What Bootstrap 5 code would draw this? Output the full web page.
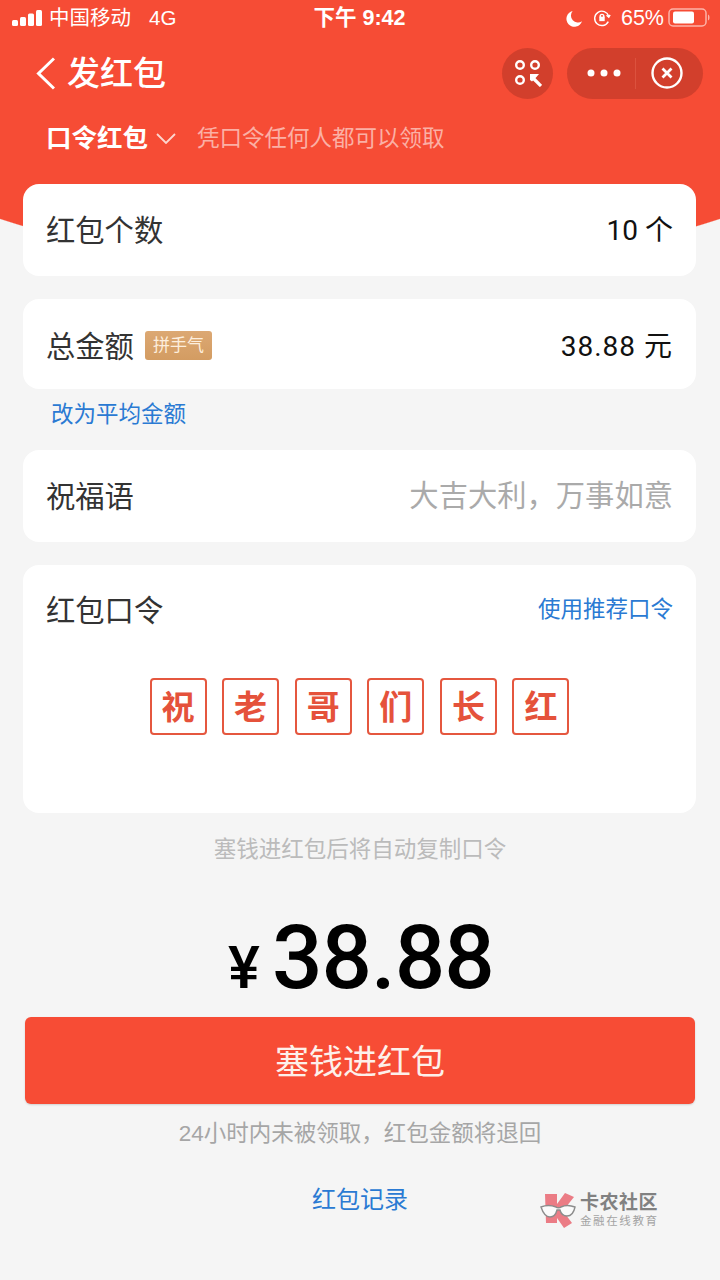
<!DOCTYPE html>
<html lang="zh">
<head>
  <meta charset="UTF-8" />
  <meta name="viewport" content="width=device-width, initial-scale=1" />
  <title>发红包</title>
  <link href="https://cdn.jsdelivr.net/npm/bootstrap@5.3.0/dist/css/bootstrap.min.css" rel="stylesheet" />
  <style>
    body {
      width: 720px;
      height: 1280px;
      overflow: hidden;
      position: relative;
      font-family: "Liberation Sans", "Noto Sans CJK SC", sans-serif;
      color: #333;
      background: radial-gradient(circle 1165px at 50% -888.500px, #f64c35 99.9%, transparent 100%) no-repeat, #f5f5f5;
    }
    .status-row { height: 36px; padding: 0 10px 0 12px; color: #fff; font-size: 20.500px; }
    .status-side { width: 300px; }
    .status-time { font-size: 21.500px; font-weight: 700; margin-left: -3px; }
    .status-gap { margin-left: 10px; }
    .status-pct { margin-left: 10px; font-size: 21.500px; }
    .carrier { margin-left: 7px; }
    .net-type { margin-left: 18px; }
    .nav-row { height: 50px; margin-top: 12px; padding: 0 17px 0 36px; color: #fff; }
    .nav-title { font-size: 33px; font-weight: 500; line-height: 50px; margin-left: 12px; padding-top: 2px; }
    .round-btn { width: 51px; height: 51px; border-radius: 50%; background: #d23f2c; margin-right: 14px; }
    .capsule { width: 136px; height: 51px; border-radius: 26px; background: #d23f2c; }
    .capsule-half { width: 68px; height: 51px; }
    .dots-half { padding-left: 6px; }
    .close-half { width: 67px; padding-right: 5px; }
    .capsule-line { width: 1px; height: 31px; background: #dc523e; }
    .mode-row { height: 40px; margin-top: 20px; padding-left: 46px; color: #fff; }
    .mode-name { font-size: 25.500px; font-weight: 700; }
    .mode-tip { font-size: 22.500px; color: #fbb0a5; margin-left: 21px; padding-top: 2px; }
    .sheet { margin: 26px 24px 0 23px; }
    .box { background: #fff; border-radius: 16px; padding: 0 23px; font-size: 29.300px; }
    .box-label { padding-top: 2px; }
    .box-count { height: 92px; }
    .box-sum { height: 90px; margin-top: 23px; padding-top: 3px; }
    .box-wish { height: 92px; margin-top: 23px; }
    .box-code { height: 248px; margin-top: 23px; padding-top: 22px; }
    .value-text { color: #111; font-family: Roboto, "Noto Sans CJK SC", sans-serif; font-size: 28px; letter-spacing: 1px; padding-top: 2px; }
    .box-count .value-text { letter-spacing: 0; }
    .lucky-tag { background: linear-gradient(#dca873, #d39c62); color: #fdeedd; font-size: 17px; line-height: 29px; height: 29px; padding: 0 8px; border-radius: 3px; margin-left: 11px; }
    .blue-link { color: #2a7ad3; font-size: 22.500px; text-decoration: none; }
    .switch-row { height: 50px; line-height: 52px; padding-left: 28px; margin-bottom: -12px; }
    .hint-text { color: #bbb; font-size: 22.500px; }
    .wish-text { color: #aaa; }
    .token-row { gap: 15.600px; margin-top: 45px; }
    .token { width: 57px; height: 57px; padding-top: 2px; border: 2px solid #e5573f; border-radius: 4px; color: #e5523b; font-size: 33px; font-weight: 700; }
    .hint-row { margin-top: 20px; line-height: 33px; }
    .money-row { margin-top: 42px; height: 100px; padding-left: 2px; color: #000; line-height: 100px; font-family: Roboto, sans-serif; font-weight: 500; }
    .money-sign { font-size: 60px; margin-right: 12px; }
    .money-num { font-size: 89px; letter-spacing: -1px; }
    .send-btn { display: block; width: 670px; height: 87px; margin: 9px 25px 0; padding-top: 9px; background: #f74c35; border: 0; border-radius: 6px; color: #fdf0ea; font-size: 34px; box-shadow: 0 1px 2px rgba(0,0,0,.15); }
    .note-row { color: #a6a6a6; font-size: 22.500px; margin-top: 13px; line-height: 33px; }
    .record-row { margin-top: 33px; line-height: 33px; }
    .record-row a { font-size: 24px; }
    .site-logo { position: absolute; left: 540px; top: 1192px; opacity: .65; }
    .site-name { font-size: 19px; font-weight: 700; line-height: 22px; color: #444; letter-spacing: .5px; }
    .site-sub { font-size: 11.500px; line-height: 14px; color: #777; letter-spacing: 1.600px; }
  </style>
</head>
<body>

<div class="status-row d-flex align-items-center justify-content-between">
  <div class="status-side d-flex align-items-center">
    <svg width="30" height="18" viewBox="0 0 30 18" fill="#fff">
      <rect x="0" y="11" width="6" height="6" rx="1.500"/><rect x="8" y="8" width="6" height="9" rx="1.500"/>
      <rect x="16" y="4.500" width="6" height="12.500" rx="1.500"/><rect x="24" y="1" width="6" height="16" rx="1.500"/>
    </svg>
    <span class="carrier">中国移动</span><span class="net-type">4G</span>
  </div>
  <div class="status-time">下午 9:42</div>
  <div class="status-side d-flex align-items-center justify-content-end">
    <svg width="17" height="17" viewBox="0 0 18 18" fill="#fff"><path d="M7 1a8.500 8.500 0 1 0 10 11 7.500 7.500 0 0 1-10-11z"/></svg>
    <svg class="status-gap" width="18" height="18" viewBox="0 0 20 20" fill="none" stroke="#fff" stroke-width="1.600">
      <path d="M17.500 8A8 8 0 1 0 17 14"/><path d="M15 7l2.500 2L19 6.500"/><rect x="7" y="8.500" width="6" height="5" fill="#fff" stroke="none"/><circle cx="10" cy="8" r="2"/>
    </svg>
    <span class="status-pct">65%</span>
    <svg class="ms-1" width="42" height="20" viewBox="0 0 42 20">
      <rect x="1" y="1" width="37" height="17" rx="4" fill="none" stroke="#fdb3a8" stroke-width="1.500"/>
      <rect x="5" y="3.500" width="21" height="12" rx="2" fill="#fff"/>
      <path d="M40 6.500c2 .5 2 5.500 0 6z" fill="#fdb3a8"/>
    </svg>
  </div>
</div>

<div class="nav-row d-flex align-items-center">
  <svg width="19" height="33" viewBox="0 0 19 33" fill="none" stroke="#fff" stroke-width="3"><path d="M18 1.500 2.500 16.500 18 31.500"/></svg>
  <div class="nav-title">发红包</div>
  <div class="round-btn d-flex align-items-center justify-content-center ms-auto">
    <svg width="28" height="28" viewBox="0 0 28 28" fill="none" stroke="#fff" stroke-width="2.400">
      <circle cx="6" cy="6" r="3.800"/><circle cx="21" cy="6" r="3.800"/><circle cx="6" cy="21" r="3.800"/>
      <path d="M19 19l8 8" stroke-width="3.200"/><path d="M16 15h9l-2.500 3-4.500 4.500-2-1.500z" fill="#fff" stroke="none"/>
    </svg>
  </div>
  <div class="capsule d-flex align-items-center">
    <div class="capsule-half dots-half d-flex align-items-center justify-content-center">
      <svg width="34" height="8" viewBox="0 0 34 8" fill="#fff"><circle cx="4" cy="4" r="3.500"/><circle cx="17" cy="4" r="3.500"/><circle cx="30" cy="4" r="3.500"/></svg>
    </div>
    <div class="capsule-line"></div>
    <div class="capsule-half close-half d-flex align-items-center justify-content-center">
      <svg width="32" height="32" viewBox="0 0 32 32" fill="none" stroke="#fff"><circle cx="16" cy="16" r="14.500" stroke-width="2.400"/><path d="M11.500 11.500l9 9M20.500 11.500l-9 9" stroke-width="2.800"/></svg>
    </div>
  </div>
</div>

<div class="mode-row d-flex align-items-center">
  <span class="mode-name">口令红包</span>
  <svg class="ms-2" width="20" height="11" viewBox="0 0 20 11" fill="none" stroke="#fdd6cf" stroke-width="1.800"><path d="M1 1l9 9 9-9"/></svg>
  <span class="mode-tip">凭口令任何人都可以领取</span>
</div>

<div class="sheet">
  <div class="box box-count d-flex align-items-center justify-content-between">
    <span class="box-label">红包个数</span><span class="value-text">10 个</span>
  </div>
  <div class="box box-sum d-flex align-items-center justify-content-between">
    <div class="d-flex align-items-center"><span class="box-label">总金额</span><span class="lucky-tag">拼手气</span></div>
    <span class="value-text">38.88 元</span>
  </div>
  <div class="switch-row"><a class="blue-link" href="#">改为平均金额</a></div>
  <div class="box box-wish d-flex align-items-center justify-content-between">
    <span class="box-label">祝福语</span><span class="wish-text">大吉大利，万事如意</span>
  </div>
  <div class="box box-code">
    <div class="d-flex align-items-center justify-content-between">
      <span class="box-label">红包口令</span><a class="blue-link" href="#">使用推荐口令</a>
    </div>
    <div class="token-row d-flex justify-content-center" id="tokens"></div>
  </div>
</div>

<div class="hint-row hint-text text-center">塞钱进红包后将自动复制口令</div>
<div class="money-row d-flex justify-content-center align-items-baseline">
  <span class="money-sign">¥</span><span class="money-num">38.88</span>
</div>
<button class="btn send-btn" type="button">塞钱进红包</button>
<div class="note-row text-center">24小时内未被领取，红包金额将退回</div>
<div class="record-row text-center"><a class="blue-link" href="#">红包记录</a></div>

<div class="site-logo d-flex align-items-center">
  <svg width="36" height="36" viewBox="0 0 36 36">
    <path d="M5 2h12v10L25 1l9 4-8 10-3 4 9 12-8 5-7-10v5H6z" fill="#e63c4a"/>
    <path d="M1 15c5-2 10-2 15 0 1 1 4 1 5 0 4-2 9-2 14 0-1 5-3 9-8 9-4 0-6-2-7-6h-3c-1 4-3 7-7 7S3 21 1 15z" fill="#fff" stroke="#555" stroke-width="1.400"/>
  </svg>
  <div class="ms-1">
    <div class="site-name">卡农社区</div>
    <div class="site-sub">金融在线教育</div>
  </div>
</div>

<script>
  const tokens = '祝老哥们长红'.split('');
  document.getElementById('tokens').innerHTML = tokens.map(t =>
    `<div class="token d-flex align-items-center justify-content-center">${t}</div>`
  ).join('');
</script>
<script src="https://cdn.jsdelivr.net/npm/bootstrap@5.3.0/dist/js/bootstrap.bundle.min.js"></script>
</body>
</html>
